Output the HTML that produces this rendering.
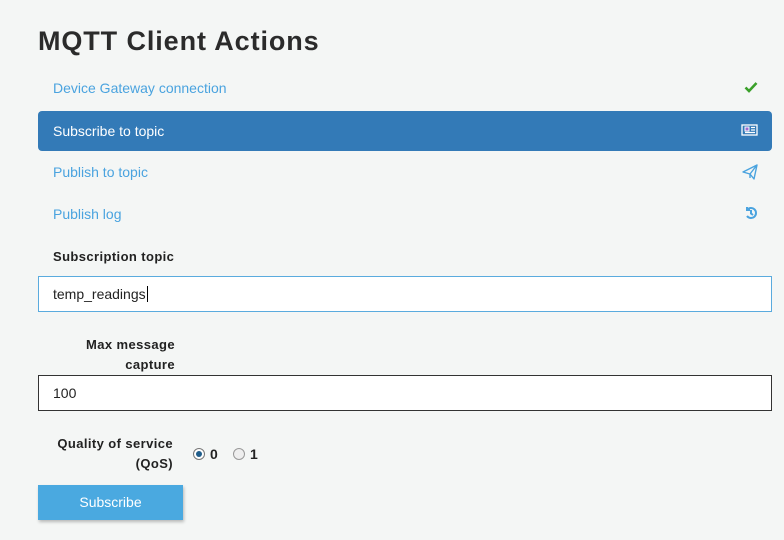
<!DOCTYPE html>
<html><head><style>
body{margin:0;width:784px;height:540px;background:#f4f6f5;font-family:"Liberation Sans","DejaVu Sans",sans-serif;position:relative;overflow:hidden}
.a{position:absolute}
h1{position:absolute;left:38px;top:26px;margin:0;font-size:27px;font-weight:bold;color:#2b2b2b;letter-spacing:0.9px}
.item{position:absolute;left:38px;width:734px;height:40px;border-radius:4px;font-size:14px;color:#4aa3df;line-height:40px;text-indent:15px}
.act{background:#337ab7;color:#fff}
.ic{position:absolute;right:14px;top:12px}
.lbl{position:absolute;font-size:13px;font-weight:bold;color:#222;text-align:right;line-height:20px;letter-spacing:0.4px}
.inp{position:absolute;left:38px;width:732px;height:34px;background:#fff;font-size:14px;line-height:34px;text-indent:14px;color:#222}
</style></head><body>
<h1>MQTT Client Actions</h1>
<div class="item" style="top:68px">Device Gateway connection<svg class="ic" width="14" height="14" viewBox="0 0 14 14"><path d="M1.5 7.5l3.5 3.5 7.5-8" stroke="#3aa02a" stroke-width="2.6" fill="none"/></svg></div>
<div class="item act" style="top:111px">Subscribe to topic<svg class="ic" width="17" height="14" viewBox="0 0 17 14"><rect x="1" y="2" width="15" height="10" fill="none" stroke="#fff" stroke-width="1.3"/><rect x="4" y="4" width="4" height="4" fill="#9c6ad0" stroke="#fff"/><path d="M10 4.5h4M10 7h4M4 9.5h10" stroke="#fff" stroke-width="1.2"/></svg></div>
<div class="item" style="top:152px">Publish to topic<svg class="ic" width="16" height="16" viewBox="0 0 16 16"><path d="M1 8L15 1 12 15 8 10 1 8zM8 10l7-9M8 10v4" stroke="#4aa3df" stroke-width="1.4" fill="none" stroke-linejoin="round"/></svg></div>
<div class="item" style="top:194px">Publish log<svg class="ic" width="14" height="14" viewBox="0 0 14 14"><path d="M3 4A5 5 0 1 1 3 10M3 1v3h3M7 4v3.5l2 1.5" stroke="#4aa3df" stroke-width="2" fill="none"/></svg></div>
<div class="lbl" style="left:53px;top:247px">Subscription topic</div>
<div class="inp" style="top:276px;border:1px solid #5aabde;height:34px">temp_readings<span style="display:inline-block;width:1px;height:16px;background:#000;vertical-align:-3px;margin-left:1px"></span></div>
<div class="lbl" style="left:40px;top:335px;width:135px">Max message<br>capture</div>
<div class="inp" style="top:375px;border:1px solid #333;height:34px">100</div>
<div class="lbl" style="left:20px;top:434px;width:153px">Quality of service<br>(QoS)</div>
<div class="a" style="left:193px;top:448px;width:10px;height:10px;border-radius:50%;border:1px solid #777;background:#fff"><div style="margin:2px;width:6px;height:6px;border-radius:50%;background:#1f5d8a"></div></div>
<div class="a" style="left:210px;top:446px;font-size:14px;font-weight:bold;color:#222">0</div>
<div class="a" style="left:233px;top:448px;width:10px;height:10px;border-radius:50%;border:1px solid #999;background:#eee"></div>
<div class="a" style="left:250px;top:446px;font-size:14px;font-weight:bold;color:#222">1</div>
<div class="a" style="left:38px;top:485px;width:145px;height:35px;background:#4aa9e0;color:#fff;font-size:14px;line-height:35px;text-align:center;box-shadow:1px 2px 3px rgba(0,0,0,0.25)">Subscribe</div>
</body></html>
